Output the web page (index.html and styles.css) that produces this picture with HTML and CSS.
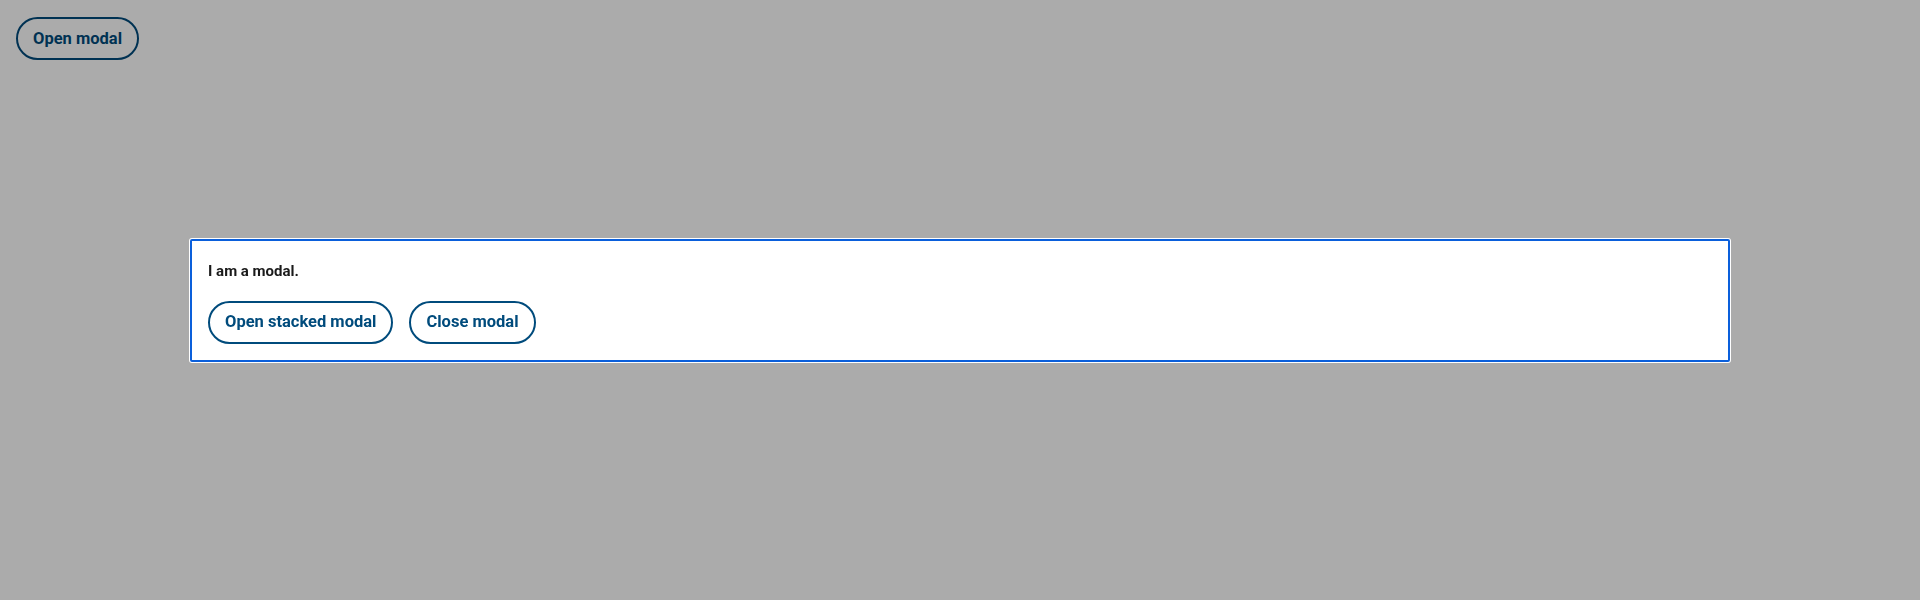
FILE: index.html
```html
<!DOCTYPE html>
<html lang="en">
<head>
<meta charset="utf-8">
<title>Modal</title>
<link rel="stylesheet" href="styles.css">
</head>
<body>
<main class="page">
  <button class="btn btn-under" type="button">Open modal</button>
</main>
<div class="backdrop">
  <div class="modal" role="dialog" aria-modal="true">
    <p class="modal-text">I am a modal.</p>
    <div class="modal-actions">
      <button class="btn" type="button">Open stacked modal</button>
      <button class="btn" type="button">Close modal</button>
    </div>
  </div>
</div>
</body>
</html>
```

FILE: styles.css
```css
html, body {
  margin: 0;
  padding: 0;
  height: 100%;
}
body {
  background: #ababab;
  font-family: Roboto, "Noto Sans", sans-serif;
  overflow: hidden;
}
.page {
  padding: 17px 16px;
}
.btn {
  box-sizing: border-box;
  height: 43px;
  padding: 0 15px;
  border: 2px solid #004b7c;
  border-radius: 22px;
  background: #ffffff;
  color: #004b7c;
  font-family: Roboto, "Noto Sans", sans-serif;
  font-size: 16.5px;
  font-weight: 700;
  line-height: 20px;
}
.btn-under {
  background: transparent;
  border-color: #003253;
  color: #003253;
}
.backdrop {
  position: fixed;
  inset: 0;
  display: flex;
  align-items: center;
  justify-content: center;
}
.modal {
  box-sizing: border-box;
  width: 1540px;
  background: #ffffff;
  border: 2px solid #0a5fdb;
  border-radius: 2px;
  box-shadow: 0 0 0 1px #ffffff;
  padding: 16px;
}
.modal-text {
  margin: 4px 0 0;
  font-size: 15px;
  font-weight: 700;
  line-height: 21px;
  color: #1a1a1a;
}
.modal-actions {
  display: flex;
  gap: 16px;
  margin-top: 19px;
}
```
